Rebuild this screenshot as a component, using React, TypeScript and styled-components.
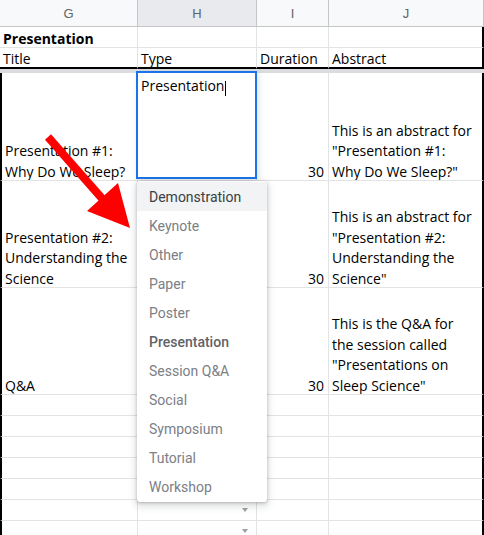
import React from "react";
import styled, { createGlobalStyle } from "styled-components";

const Global = createGlobalStyle`
  html, body { margin: 0; padding: 0; background: #fff; }
  body { width: 484px; height: 535px; overflow: hidden; }
`;

const COLS = "138px 119px 72px 155px";
const GRID = "#e2e3e3";
const HEAD_LINE = "#c4c7c5";

const Sheet = styled.div`
  position: relative;
  width: 484px;
  height: 535px;
  overflow: hidden;
  background: #fff;
  font-family: "Open Sans", "Noto Sans", sans-serif;
`;

const Row = styled.div<{ $h: number }>`
  display: grid;
  grid-template-columns: ${COLS};
  height: ${(p) => p.$h}px;
`;

const ColHeader = styled.div<{ $selected?: boolean }>`
  box-sizing: border-box;
  display: flex;
  align-items: center;
  justify-content: center;
  background: ${(p) => (p.$selected ? "#e8eaed" : "#f8f9fa")};
  border-right: 1px solid ${HEAD_LINE};
  border-bottom: 1px solid ${HEAD_LINE};
  font-family: "Liberation Sans", Arial, sans-serif;
  font-size: 13px;
  color: #5f6368;
`;

const Cell = styled.div<{
  $edge?: "left" | "right";
  $right?: boolean;
  $bold?: boolean;
  $thickBottom?: boolean;
  $tight?: boolean;
}>`
  box-sizing: border-box;
  display: flex;
  flex-direction: column;
  justify-content: flex-end;
  align-items: ${(p) => (p.$right ? "flex-end" : "flex-start")};
  overflow: hidden;
  padding: 0 ${(p) => (p.$right ? 4 : 3)}px 0 3px;
  border-right: ${(p) => (p.$edge === "right" ? "2px solid #000" : `1px solid ${GRID}`)};
  border-left: ${(p) => (p.$edge === "left" ? "2px solid #000" : "0")};
  border-bottom: ${(p) => (p.$thickBottom ? "2px solid #000" : `1px solid ${GRID}`)};
  font-size: 14px;
  line-height: ${(p) => (p.$tight ? "17px" : "20.6px")};
  font-weight: ${(p) => (p.$bold ? 700 : 400)};
  color: #000;
  white-space: pre;
`;

const CellText = styled.span`
  display: block;
  margin-bottom: -2.5px;
`;

const ChipCell = styled(Cell)`
  flex-direction: row;
  align-items: center;
  justify-content: flex-end;
  padding-right: 8px;
`;

const ChipArrow = styled.span`
  width: 0;
  height: 0;
  border-left: 3.5px solid transparent;
  border-right: 3.5px solid transparent;
  border-top: 4px solid #9aa0a6;
`;

const FreezeBar = styled.div`
  height: 4px;
  background: #dadce0;
`;

const Editor = styled.div`
  position: absolute;
  left: 136px;
  top: 71px;
  width: 121px;
  height: 108px;
  box-sizing: border-box;
  border: 2px solid #1a73e8;
  background: #fff;
  padding: 2.5px 3px 0;
  font-size: 14px;
  line-height: 20.6px;
  color: #000;
  box-shadow: 2px 2px 6px rgba(60, 64, 67, 0.15);
`;

const Caret = styled.span`
  display: inline-block;
  width: 1px;
  height: 15px;
  background: #000;
  vertical-align: -5px;
  margin-left: 1px;
`;

const Menu = styled.ul`
  position: absolute;
  left: 137px;
  top: 181px;
  width: 130px;
  height: 321px;
  box-sizing: border-box;
  margin: 0;
  padding: 1px 0;
  list-style: none;
  background: #fff;
  border-radius: 3px;
  box-shadow: 0 1px 3px rgba(60, 64, 67, 0.3), 0 3px 7px 2px rgba(60, 64, 67, 0.15);
  font-family: Roboto, "Liberation Sans", Arial, sans-serif;
`;

const MenuItem = styled.li<{ $active?: boolean; $selected?: boolean }>`
  height: 29px;
  display: flex;
  align-items: center;
  padding-left: 12px;
  font-size: 14px;
  font-weight: ${(p) => (p.$selected ? 500 : 400)};
  color: ${(p) => (p.$active ? "#3c4043" : p.$selected ? "#5f6368" : "#7b8085")};
  background: ${(p) => (p.$active ? "#f1f3f4" : "transparent")};
`;

const Annotation = styled.svg`
  position: absolute;
  left: 0;
  top: 0;
  pointer-events: none;
`;

const rows = [
  {
    h: 108,
    g: "Presentation #1:\nWhy Do We Sleep?",
    d: "30",
    a: 'This is an abstract for\n"Presentation #1:\nWhy Do We Sleep?"',
  },
  {
    h: 107,
    g: "Presentation #2:\nUnderstanding the\nScience",
    d: "30",
    a: 'This is an abstract for\n"Presentation #2:\nUnderstanding the\nScience"',
  },
  {
    h: 107,
    g: "Q&A",
    d: "30",
    a: 'This is the Q&A for\nthe session called\n"Presentations on\nSleep Science"',
  },
];

const options = [
  "Demonstration",
  "Keynote",
  "Other",
  "Paper",
  "Poster",
  "Presentation",
  "Session Q&A",
  "Social",
  "Symposium",
  "Tutorial",
  "Workshop",
];

export default function App() {
  return (
    <>
      <Global />
      <Sheet>
        <Row $h={27}>
          <ColHeader>G</ColHeader>
          <ColHeader $selected>H</ColHeader>
          <ColHeader>I</ColHeader>
          <ColHeader>J</ColHeader>
        </Row>
        <Row $h={21}>
          <Cell $bold $tight>Presentation</Cell>
          <Cell $tight />
          <Cell $tight />
          <Cell $tight $edge="right" />
        </Row>
        <Row $h={21}>
          <Cell $tight $thickBottom>Title</Cell>
          <Cell $tight $thickBottom>Type</Cell>
          <Cell $tight $thickBottom>Duration</Cell>
          <Cell $tight $thickBottom $edge="right">Abstract</Cell>
        </Row>
        <FreezeBar />
        {rows.map((r, i) => (
          <Row key={i} $h={r.h}>
            <Cell $edge="left"><CellText>{r.g}</CellText></Cell>
            <Cell />
            <Cell $right><CellText>{r.d}</CellText></Cell>
            <Cell $edge="right"><CellText>{r.a}</CellText></Cell>
          </Row>
        ))}
        {Array.from({ length: 7 }).map((_, i) => (
          <Row key={`e${i}`} $h={21}>
            <Cell $edge="left" />
            <ChipCell>
              <ChipArrow />
            </ChipCell>
            <Cell />
            <Cell $edge="right" />
          </Row>
        ))}

        <Editor>
          Presentation
          <Caret />
        </Editor>

        <Menu>
          {options.map((o) => (
            <MenuItem key={o} $active={o === "Demonstration"} $selected={o === "Presentation"}>
              {o}
            </MenuItem>
          ))}
        </Menu>

        <Annotation width={484} height={535} viewBox="0 0 484 535">
          <line x1={48} y1={137} x2={106} y2={203} stroke="#ff0000" strokeWidth={8} />
          <polygon points="130,228 87,211 118,183" fill="#ff0000" />
        </Annotation>
      </Sheet>
    </>
  );
}
